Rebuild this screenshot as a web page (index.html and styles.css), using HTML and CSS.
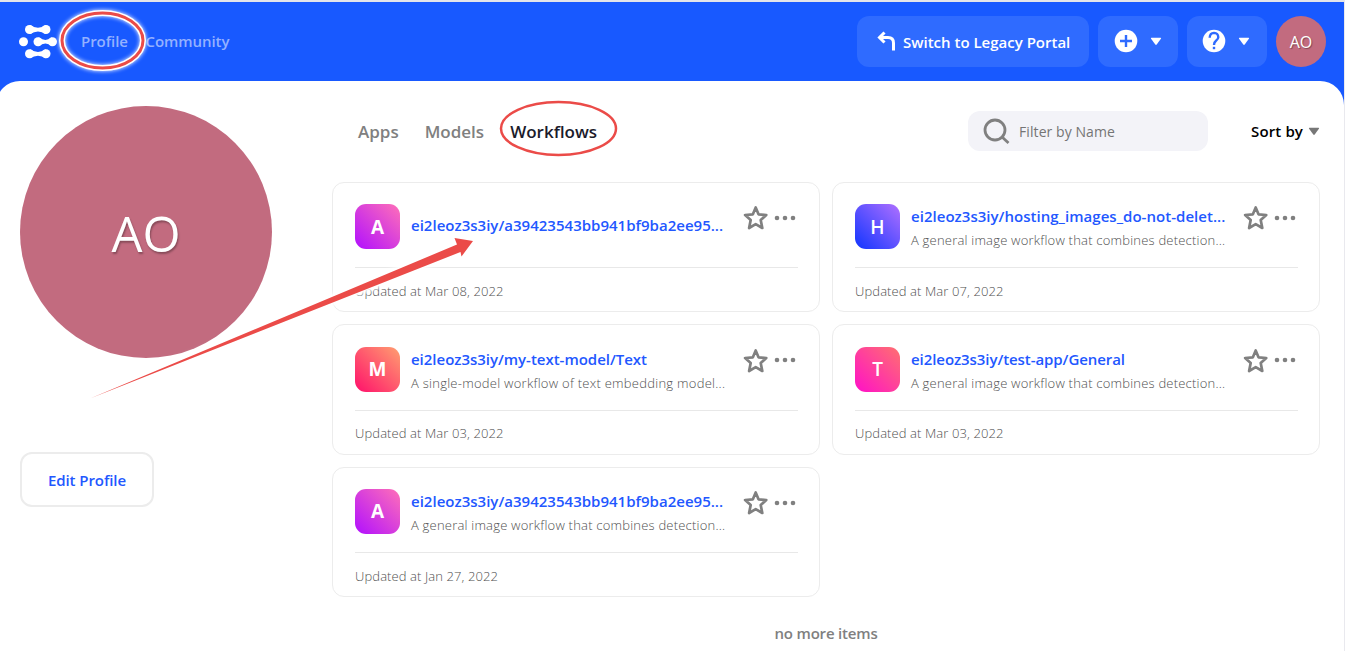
FILE: index.html
```
<!DOCTYPE html>
<html lang="en">
<head>
<meta charset="utf-8">
<title>Workflows</title>
<link rel="stylesheet" href="styles.css">
</head>
<body>
<svg class="defs" width="0" height="0" aria-hidden="true">
  <symbol id="star" viewBox="0 0 26 26"><path d="M12.700 2.500L15.500 9.300L23.300 10L17.700 15L19.300 23L12.700 19.200L6.100 23L7.700 15L2.100 10L9.900 9.300Z" fill="none" stroke="#808080" stroke-width="2.700" stroke-linejoin="round"/></symbol>
  <symbol id="dots" viewBox="0 0 22 6"><g fill="#808080"><circle cx="3" cy="3" r="2.3"/><circle cx="11" cy="3" r="2.3"/><circle cx="19" cy="3" r="2.3"/></g></symbol>
  <symbol id="caret" viewBox="0 0 12 9"><path d="M1.5 .8h9q1 0 .4.9L6.7 7.6q-.7.8-1.4 0L1.1 1.7Q.5.8 1.5.8z" fill="currentColor"/></symbol>
</svg>
<div class="page">
  <header class="topbar">
    <svg class="logo" width="39" height="34" viewBox="0 0 39 34" fill="#fff">
      <circle cx="10.5" cy="4.5" r="4.5"/><circle cx="27" cy="4.5" r="4.5"/><path d="M11 0Q19 5.6 27 0V9Q19 3.8 11 9z"/>
      <circle cx="4.5" cy="16.7" r="4.5"/>
      <circle cx="19" cy="16.7" r="4.5"/><circle cx="33.5" cy="16.7" r="4.5"/><path d="M19.5 12.2Q26.5 17.8 33 12.2V21.2Q26.500 16 19.500 21.200z"/>
      <circle cx="10.5" cy="28.800" r="4.500"/><circle cx="27" cy="28.800" r="4.500"/><path d="M11 24.300Q19 29.900 27 24.300V33.300Q19 28.100 11 33.300z"/>
    </svg>
    <nav class="mainnav"><a>Profile</a><a>Community</a></nav>
    <div class="actions">
      <div class="btn legacy">
        <svg width="19" height="20" viewBox="0 0 19 20" fill="none" stroke="#fff" stroke-width="3"><path d="M3 6.500H11Q16.500 6.500 16.500 12V19.500"/><path d="M7.500 1.500L2.500 6.500L7.500 11.500"/></svg>
        <span>Switch to Legacy Portal</span>
      </div>
      <div class="btn small">
        <svg width="24" height="24" viewBox="0 0 24 24"><circle cx="12" cy="12" r="11.300" fill="#fff"/><path d="M12 6V18M6 12H18" stroke="#2f6bff" stroke-width="2.400"/></svg>
        <svg class="caret" width="12" height="9"><use href="#caret"/></svg>
      </div>
      <div class="btn small help">
        <svg width="24" height="24" viewBox="0 0 24 24"><circle cx="12" cy="12" r="11.300" fill="#fff"/><path d="M7.700 8.700Q7.900 4 12 3.900Q16.100 4 16.300 8.300Q16.300 10 14 11.700Q12 13.200 12 15.900" fill="none" stroke="#2f6bff" stroke-width="2.400"/><rect x="10.800" y="17.800" width="2.400" height="2.400" fill="#2f6bff"/></svg>
        <svg class="caret" width="12" height="9"><use href="#caret"/></svg>
      </div>
      <div class="avatar">AO</div>
    </div>
  </header>
  <main class="sheet">
    <aside class="side">
      <div class="portrait">AO</div>
      <button class="edit">Edit Profile</button>
    </aside>
    <section class="content">
      <div class="toolbar">
        <nav class="tabs"><a>Apps</a><a>Models</a><a class="on">Workflows</a></nav>
        <div class="search">
          <svg width="27" height="27" viewBox="0 0 27 27" fill="none" stroke="#808080" stroke-width="2.800"><circle cx="12" cy="12" r="10"/><path d="M18.500 18.500L25.500 25"/></svg>
          <span>Filter by Name</span>
        </div>
        <div class="sort"><span>Sort by</span><svg width="12" height="9"><use href="#caret"/></svg></div>
      </div>
      <div class="cards">
        <article class="card">
          <div class="head"><div class="tile violet">A</div><div class="info solo"><a>ei2leoz3s3iy/a39423543bb941bf9ba2ee95...</a></div><svg class="star" width="26" height="26"><use href="#star"/></svg><svg class="dots" width="22" height="6"><use href="#dots"/></svg></div>
          <div class="foot">Updated at Mar 08, 2022</div>
        </article>
        <article class="card">
          <div class="head"><div class="tile blue">H</div><div class="info"><a class="host">ei2leoz3s3iy/hosting_images_do-not-delet...</a><p>A general image workflow that combines detection...</p></div><svg class="star" width="26" height="26"><use href="#star"/></svg><svg class="dots" width="22" height="6"><use href="#dots"/></svg></div>
          <div class="foot">Updated at Mar 07, 2022</div>
        </article>
        <article class="card">
          <div class="head"><div class="tile coral">M</div><div class="info"><a class="text">ei2leoz3s3iy/my-text-model/Text</a><p class="single">A single-model workflow of text embedding model...</p></div><svg class="star" width="26" height="26"><use href="#star"/></svg><svg class="dots" width="22" height="6"><use href="#dots"/></svg></div>
          <div class="foot">Updated at Mar 03, 2022</div>
        </article>
        <article class="card">
          <div class="head"><div class="tile pink">T</div><div class="info"><a class="tight">ei2leoz3s3iy/test-app/General</a><p>A general image workflow that combines detection...</p></div><svg class="star" width="26" height="26"><use href="#star"/></svg><svg class="dots" width="22" height="6"><use href="#dots"/></svg></div>
          <div class="foot">Updated at Mar 03, 2022</div>
        </article>
        <article class="card">
          <div class="head"><div class="tile violet">A</div><div class="info"><a>ei2leoz3s3iy/a39423543bb941bf9ba2ee95...</a><p>A general image workflow that combines detection...</p></div><svg class="star" width="26" height="26"><use href="#star"/></svg><svg class="dots" width="22" height="6"><use href="#dots"/></svg></div>
          <div class="foot">Updated at Jan 27, 2022</div>
        </article>
      </div>
      <div class="end">no more items</div>
    </section>
  </main>
</div>
<svg class="notes" width="1345" height="651" viewBox="0 0 1345 651" aria-hidden="true">
  <ellipse class="glow" cx="102.500" cy="40.500" rx="40.500" ry="27.500"/>
  <ellipse class="ring" cx="102.500" cy="40.500" rx="40.500" ry="27.500"/>
  <ellipse class="ring thin" cx="558.500" cy="128.500" rx="57.500" ry="26.500"/>
  <path class="arrow" d="M90 398.500L457 244.500L454.500 238L473 241L461.500 256.500L460.500 252Z"/>
</svg>
</body>
</html>
```
FILE: styles.css
```
* { box-sizing: border-box; }
body {
  margin: 0;
  font-family: "Open Sans", "Noto Sans", sans-serif;
  font-size: 15px;
  font-weight: 600;
  background: #fff;
}
.defs { position: absolute; }
.page {
  width: 1345px;
  height: 651px;
  overflow: hidden;
  border-top: 2px solid #e3e5ea;
  border-right: 1px solid #e9e9ee;
  background: linear-gradient(#1859ff 130px, #fff 130px);
}
.topbar {
  height: 79px;
  display: flex;
  align-items: center;
  padding: 0 18px 0 19px;
}
.logo { margin-top: 1px; }
.mainnav {
  display: flex;
  gap: 17.500px;
  margin: -2px 0 0 23px;
  color: #94b1ff;
  letter-spacing: -.05px;
}
.actions {
  display: flex;
  align-items: center;
  gap: 9px;
  margin-left: auto;
  color: #fff;
}
.btn {
  height: 51px;
  border-radius: 12px;
  background: #2f6bff;
  display: flex;
  align-items: center;
}
.legacy { width: 232px; padding-left: 20px; gap: 7px; white-space: nowrap; }
.legacy svg { margin-top: -1px; }
.small { width: 80px; padding-left: 16px; gap: 12px; }
.small svg { margin-top: -1px; }
.help { padding-left: 15px; }
.avatar {
  width: 50px;
  height: 51px;
  border-radius: 50%;
  background: #c26b7f;
  display: grid;
  place-items: center;
  font-size: 16px;
  font-weight: 400;
  text-shadow: 1px 1px 1px rgba(0, 0, 0, .35);
}
.sheet {
  height: 570px;
  margin-left: -4px;
  padding-left: 24px;
  border-radius: 24px 24px 0 0;
  background: #fff;
  display: flex;
}
.side { width: 312px; padding-top: 25px; flex: none; }
.portrait {
  width: 252px;
  height: 252px;
  border-radius: 50%;
  background: #c26b7f;
  color: #fff;
  display: grid;
  place-items: center;
  padding-top: 2px;
  font-size: 49px;
  font-weight: 400;
  text-shadow: 1px 2px 2px rgba(0, 0, 0, .3);
}
.edit {
  display: block;
  width: 134px;
  height: 55px;
  margin-top: 94px;
  padding: 0;
  border: 2px solid #ececec;
  border-radius: 12px;
  background: #fff;
  color: #2257ff;
  font: inherit;
  letter-spacing: -.08px;
}
.content { width: 988px; }
.toolbar {
  height: 40px;
  margin-top: 30px;
  display: flex;
  align-items: center;
}
.tabs {
  display: flex;
  gap: 26px;
  margin-left: 26px;
  font-size: 17px;
  color: #808080;
}
.tabs .on { color: #1b1b2b; }
.search {
  width: 240px;
  height: 40px;
  margin-left: auto;
  padding-left: 15px;
  border-radius: 12px;
  background: #f3f3f8;
  display: flex;
  align-items: center;
  gap: 9px;
  color: #757575;
  font-size: 14px;
  font-weight: 400;
  letter-spacing: .07px;
}
.sort {
  display: flex;
  align-items: center;
  gap: 5px;
  margin-left: 43px;
  color: #000;
  letter-spacing: .12px;
}
.sort svg { color: #777; }
.cards {
  display: grid;
  grid-template-columns: 488px 488px;
  grid-auto-rows: 130.400px;
  gap: 12px;
  margin-top: 30.900px;
}
.card {
  border: 1px solid #ececec;
  border-radius: 12px;
  padding: 0 21px 0 22px;
}
.head {
  height: 85.300px;
  display: flex;
  align-items: flex-start;
  padding-top: 21.300px;
  border-bottom: 1px solid #e8e8e8;
}
.tile {
  width: 45px;
  height: 45px;
  border-radius: 11px;
  display: grid;
  place-items: center;
  color: #fff;
  font-size: 19px;
  font-weight: 700;
}
.violet { background: linear-gradient(45deg, #b10fff, #ff70b8); }
.blue { background: linear-gradient(45deg, #1035ff, #b070ff); font-weight: 600; }
.coral { background: linear-gradient(45deg, #ff106b, #ff9f70); }
.pink { background: linear-gradient(45deg, #ff10c8, #ff7070); font-weight: 600; }
.info {
  width: 333px;
  height: 45px;
  padding: 2px 0 0 11px;
  display: flex;
  flex-direction: column;
  justify-content: center;
  white-space: nowrap;
}
.solo { padding: 0 0 2.500px 11px; }
.info a { color: #2257ff; line-height: 22px; letter-spacing: .015px; }
.info .host { letter-spacing: .03px; }
.info .text { letter-spacing: -.02px; }
.info .tight { letter-spacing: -.07px; }
.info p {
  margin: 3px 0 0;
  line-height: 20px;
  font-size: 13px;
  font-weight: 300;
  color: #505050;
  letter-spacing: .21px;
}
.info .single { letter-spacing: .26px; }
.star { margin: 1px 0 0 10px; }
.dots { margin: 10.700px 0 0 5px; }
.foot {
  padding-top: 12.750px;
  line-height: 20px;
  font-size: 13px;
  font-weight: 300;
  color: #505050;
  letter-spacing: .1px;
}
.end { margin-top: 25.500px; text-align: center; color: #808080; letter-spacing: -.18px; }
.notes { position: absolute; left: 0; top: 0; pointer-events: none; }
.ring { fill: none; stroke: #eb4b48; stroke-width: 3; }
.ring.thin { stroke-width: 2.500; }
.glow { fill: none; stroke: #fff; stroke-width: 6; filter: drop-shadow(0 0 2px #fff); }
.arrow {
  fill: #eb4b48;
  stroke: #fff;
  stroke-width: 1;
  paint-order: stroke;
  filter: drop-shadow(0 0 1px #fff) drop-shadow(0 0 2px #fff) drop-shadow(0 0 2px #fff);
}
```
